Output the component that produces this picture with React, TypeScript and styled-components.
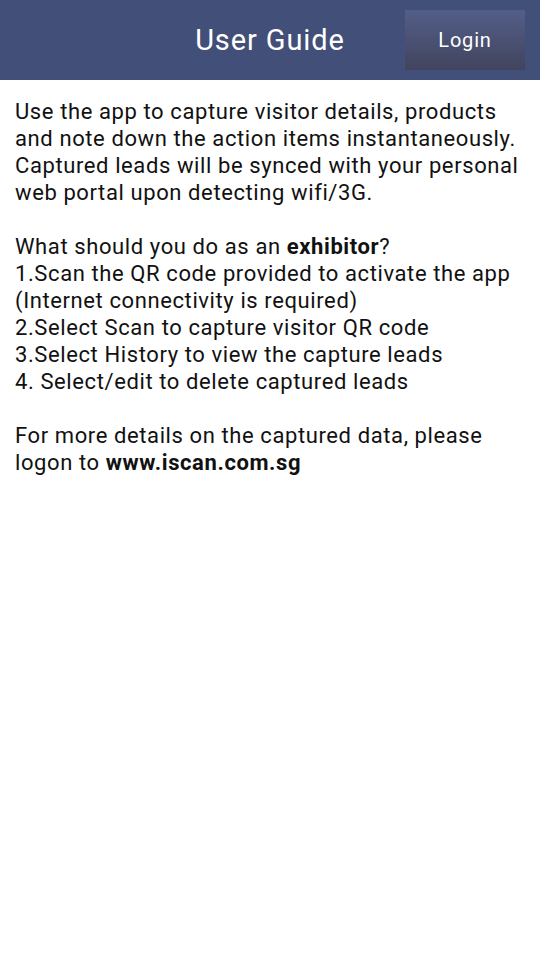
import React from "react";
import styled, { createGlobalStyle } from "styled-components";

const Global = createGlobalStyle`
  html, body { margin: 0; padding: 0; background: #ffffff; }
  body { font-family: Roboto, "Noto Sans", sans-serif; }
`;

const Page = styled.div`
  width: 540px;
  min-height: 960px;
  background: #ffffff;
`;

const Header = styled.header`
  height: 80px;
  background: #424f78;
  display: grid;
  grid-template-columns: 1fr auto;
  align-items: center;
  position: relative;
  padding-right: 15px;
  box-sizing: border-box;
`;

const Title = styled.h1`
  position: absolute;
  left: 0;
  right: 0;
  top: 0;
  bottom: 0;
  margin: 0;
  display: flex;
  align-items: center;
  justify-content: center;
  font-family: Roboto, sans-serif;
  font-weight: 400;
  font-size: 29px;
  letter-spacing: 0.9px;
  color: #ffffff;
  pointer-events: none;
`;

const LoginButton = styled.button`
  grid-column: 2;
  width: 120px;
  height: 60px;
  border: none;
  background: linear-gradient(to bottom, #535e88, #41445d);
  color: #ffffff;
  font-family: Roboto, sans-serif;
  font-size: 20px;
  letter-spacing: 0.8px;
  position: relative;
  z-index: 1;
`;

const Content = styled.main`
  padding: 18px 15px 0 15px;
  font-family: Roboto, sans-serif;
  font-size: 22px;
  letter-spacing: 0.6px;
  line-height: 27px;
  color: #111111;
`;

const Para = styled.p`
  margin: 0 0 27px 0;
`;

const Strong = styled.b`
  font-weight: 700;
`;

export default function App() {
  return (
    <Page>
      <Global />
      <Header>
        <Title>User Guide</Title>
        <LoginButton>Login</LoginButton>
      </Header>
      <Content>
        <Para>
          Use the app to capture visitor details, products and note down the action items
          instantaneously. Captured leads will be synced with your personal web portal upon
          detecting wifi/3G.
        </Para>
        <Para>
          What should you do as an <Strong>exhibitor</Strong>?<br />
          1.Scan the QR code provided to activate the app (Internet connectivity is required)
          <br />
          2.Select Scan to capture visitor QR code
          <br />
          3.Select History to view the capture leads
          <br />
          4. Select/edit to delete captured leads
        </Para>
        <Para>
          For more details on the captured data, please logon to <Strong>www.iscan.com.sg</Strong>
        </Para>
      </Content>
    </Page>
  );
}
